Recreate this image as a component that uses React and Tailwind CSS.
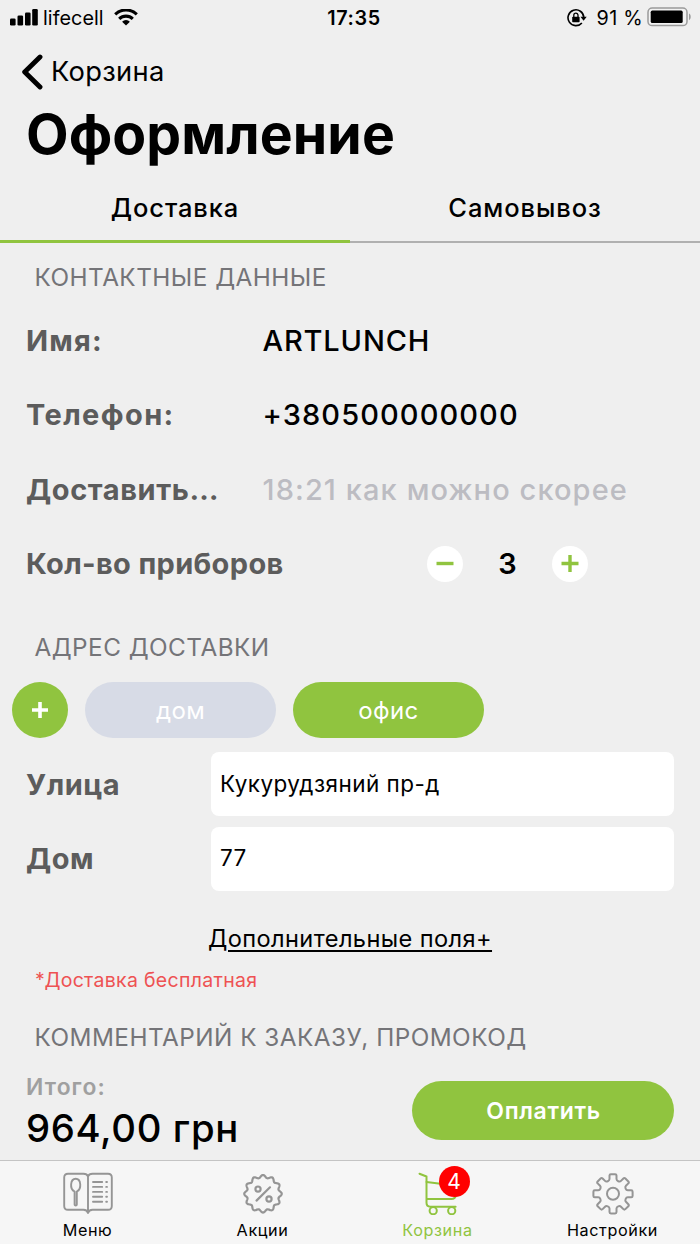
import { useState } from 'react'

const contacts = [
  { label: 'Имя:', value: 'ARTLUNCH', labelClass: 'tracking-[1.2px]', valueClass: 'tracking-[0.85px]' },
  { label: 'Телефон:', value: '+380500000000', labelClass: 'tracking-[1.4px]', valueClass: 'tracking-[1.1px]' },
  {
    label: 'Доставить…',
    value: '18:21 как можно скорее',
    labelClass: 'tracking-[0.6px]',
    valueClass: 'tracking-[1.1px] text-[#bcbcc2]',
  },
]

function StatusBar() {
  return (
    <div className="grid h-[36px] grid-cols-[1fr_auto_1fr] items-center pl-[10px] pr-[8px] text-[19.8px] leading-none">
      <div className="flex items-center">
        <svg width="28" height="18" viewBox="0 0 28 18">
          <rect x="0" y="9.5" width="5.6" height="7" rx="1.3" />
          <rect x="7.5" y="6.5" width="5.6" height="10" rx="1.3" />
          <rect x="15" y="3.5" width="5.6" height="13" rx="1.3" />
          <rect x="22.2" y="0" width="5.6" height="16.5" rx="1.3" />
        </svg>
        <span className="ml-[5px] pt-px tracking-[0.05px]">lifecell</span>
        <svg className="ml-[10px]" width="24" height="18" viewBox="0 0.6 24 18" fill="none" stroke="#000" strokeWidth="3.1">
          <path d="M1.2 5.9a15.8 15.8 0 0 1 21.6 0" />
          <path d="M5.2 10.4a9.9 9.9 0 0 1 13.6 0" />
          <path d="M12 17.2l-3.9-3.9a5.5 5.5 0 0 1 7.8 0z" fill="#000" stroke="none" />
        </svg>
      </div>
      <span className="pl-[6px] pt-px font-semibold tracking-[0.6px]">17:35</span>
      <div className="flex items-center justify-end">
        <svg width="20" height="18" viewBox="0 0 20 18">
          <path d="M14.9 13.9A7.9 7.9 0 1 1 16.8 8.4" fill="none" stroke="#000" strokeWidth="1.6" />
          <path d="M13.5 7.7h6.2l-3.1 4z" />
          <rect x="5.2" y="7.7" width="7.4" height="5.5" rx="0.8" />
          <path d="M6.8 8V6.2a2.1 2.1 0 0 1 4.2 0V8" fill="none" stroke="#000" strokeWidth="1.3" />
        </svg>
        <span className="ml-[10px] pt-px tracking-[0.4px] [word-spacing:-0.5px]">91 %</span>
        <svg className="-mt-px ml-[4px]" width="45" height="20" viewBox="0 0 45 20">
          <rect x="1" y="1" width="39" height="17.6" rx="4.2" fill="#f2f2f2" stroke="#9b9b9b" strokeWidth="1.5" />
          <rect x="3.7" y="3.6" width="32" height="12.4" rx="1.6" />
          <path d="M42 6.6c2.3.8 2.3 5.8 0 6.6z" fill="#9b9b9b" />
        </svg>
      </div>
    </div>
  )
}

function Tabs() {
  return (
    <div className="grid h-[73px] grid-cols-2 text-center text-[25.5px] font-medium leading-[76px] tracking-[0.9px]">
      <button className="h-[73px] border-b-[3px] border-[#90c43f]">Доставка</button>
      <button className="h-[73px] border-b-2 border-[#b0b0b0]">Самовывоз</button>
    </div>
  )
}

function SectionTitle({ children }) {
  return (
    <h2 className="pl-[34.5px] text-[24.3px] font-normal leading-[30px] tracking-[0.47px] text-[#747478]">
      {children}
    </h2>
  )
}

function Field({ label, value }) {
  return (
    <label className="flex h-[74.5px] items-center px-[26px]">
      <span className="w-[185px] text-[29px] font-bold tracking-[0.5px] text-[#5c5c5c]">{label}</span>
      <input
        className="h-[64px] min-w-0 flex-1 rounded-[8px] bg-white px-[9px] pb-[2px] text-[22.5px] tracking-[0.45px] outline-none"
        defaultValue={value}
      />
    </label>
  )
}

function Counter() {
  const [count, setCount] = useState(3)
  return (
    <div className="flex items-center">
      <button
        className="flex size-9 items-center justify-center rounded-full bg-white"
        onClick={() => setCount(Math.max(1, count - 1))}
      >
        <svg width="18" height="18" viewBox="0 0 18 18" stroke="#90c43f" strokeWidth="3.4">
          <path d="M.5 8.500h17" />
        </svg>
      </button>
      <span className="w-[89px] text-center text-[29px] font-semibold">{count}</span>
      <button
        className="flex size-9 items-center justify-center rounded-full bg-white"
        onClick={() => setCount(count + 1)}
      >
        <svg width="18" height="18" viewBox="0 0 18 18" stroke="#90c43f" strokeWidth="3.4">
          <path d="M.5 8.500h17M9 0v17" />
        </svg>
      </button>
    </div>
  )
}

function MenuIcon() {
  return (
    <svg width="50" height="44" viewBox="0 0 50 44" fill="none" stroke="#959595" strokeWidth="1.9" strokeLinecap="round" strokeLinejoin="round">
      <path d="M25 5.4Q24 2.7 20.5 2.7H5Q1.2 2.7 1.2 6.5v28.4q0 3.8 3.8 3.8h15.5q3.6 0 4.5 3.3.9-3.3 4.5-3.3H45q3.8 0 3.8-3.8V6.5q0-3.8-3.8-3.8H29.500Q26 2.700 25 5.400V42" />
      <path d="M11.600 20.500C6.300 18 7.300 7.800 12.700 7.800s6.300 10.200 1.100 12.700V33.500c0 1.300-2.200 1.300-2.200 0z" />
      <path d="M30 11h9.200M30 15.900h9.200M30 20.900h9.200M30 25.800h9.200M30 30.700h9.200M43.200 11h.8M43.200 15.900h.8M43.200 20.900h.8M43.200 25.800h.8M43.200 30.700h.8" />
    </svg>
  )
}

// 12 scalloped waves around the percent badge
function wave() {
  const pts = []
  for (let i = 0; i <= 240; i++) {
    const a = (i / 240) * Math.PI * 2
    const r = 17.4 + 1.35 * Math.cos(a * 12)
    pts.push((20 + r * Math.sin(a)).toFixed(2) + ' ' + (20 - r * Math.cos(a)).toFixed(2))
  }
  return 'M' + pts.join('L') + 'z'
}

function SaleIcon() {
  return (
    <svg width="40" height="44" viewBox="0 -2.8 40 44" fill="none" stroke="#959595" strokeWidth="2.2" strokeLinecap="round">
      <path d={wave()} />
      <path d="M13.500 26.800L27 13.500" />
      <circle cx="15" cy="15.300" r="2.600" />
      <circle cx="26" cy="25.200" r="2.600" />
    </svg>
  )
}

function CartIcon() {
  return (
    <svg width="40" height="44" viewBox="0 0 40 44" fill="none" stroke="#90c43f" strokeWidth="2" strokeLinecap="round" strokeLinejoin="round">
      <path d="M1.500 2.700l7 2.800v26.300q0 3.900 3.900 3.900h25.200" />
      <path d="M8.500 11l30 3.800v8.500q-1.300 4.800-5 4.800H9" />
      <circle cx="15.200" cy="39.700" r="3.600" fill="#f6f6f6" />
      <circle cx="33.700" cy="39.700" r="3.600" fill="#f6f6f6" />
    </svg>
  )
}

// one tooth plus the valley after it, turned eight times
function gear() {
  let d = ''
  for (let i = 0; i < 8; i++) {
    const p = (x, y, turn = i) => {
      const a = (turn * Math.PI) / 4
      return (x * Math.cos(a) - y * Math.sin(a)).toFixed(2) + ' ' + (x * Math.sin(a) + y * Math.cos(a)).toFixed(2)
    }
    d += (i ? 'L' : 'M') + p(-3.5, -14.8)
    d += 'L' + p(-3.5, -18.2) + 'Q' + p(-3.5, -19.6) + ' ' + p(-2.1, -19.6)
    d += 'L' + p(2.1, -19.6) + 'Q' + p(3.5, -19.6) + ' ' + p(3.5, -18.2)
    d += 'L' + p(3.5, -14.8) + 'C' + p(3.5, -12.8) + ' ' + p(-3.5, -12.8, i + 1) + ' ' + p(-3.5, -14.8, i + 1)
  }
  return d + 'z'
}

function GearIcon() {
  return (
    <svg width="44" height="44" viewBox="-22 -22.8 44 44" fill="none" stroke="#959595" strokeWidth="2" strokeLinejoin="round">
      <path d={gear()} />
      <circle cx="0" cy="0" r="6" />
    </svg>
  )
}

function BottomNav() {
  return (
    <nav className="grid h-[84px] shrink-0 grid-cols-4 border-t border-[#c4c4c4] bg-[#f6f6f6] text-[16.2px] tracking-[0.6px]">
      <a className="flex flex-col items-center pt-[10px]">
        <MenuIcon />
        <span className="mt-[5px] leading-5">Меню</span>
      </a>
      <a className="flex flex-col items-center pt-[10px]">
        <SaleIcon />
        <span className="mt-[5px] leading-5">Акции</span>
      </a>
      <a className="flex flex-col items-center pt-[10px] text-[#90c43f]">
        <div className="relative">
          <CartIcon />
          <span className="absolute -top-[5px] left-[21px] flex size-[31px] items-center justify-center rounded-full bg-[#ff0000] text-[21px] tracking-normal text-white">
            4
          </span>
        </div>
        <span className="mt-[5px] leading-5">Корзина</span>
      </a>
      <a className="flex flex-col items-center pt-[10px]">
        <GearIcon />
        <span className="mt-[5px] leading-5">Настройки</span>
      </a>
    </nav>
  )
}

export default function App() {
  return (
    <div className="flex h-[1244px] w-[700px] flex-col overflow-hidden bg-[#efefef] font-['Inter',sans-serif] text-black">
      <StatusBar />

      <header className="h-[134px]">
        <a className="flex h-[70px] items-center pl-[20px] text-[27.3px] leading-none tracking-[0.3px]">
          <svg className="mt-px" width="23" height="36" viewBox="0 0 23 36" fill="none" stroke="#000" strokeWidth="4.9" strokeLinecap="round" strokeLinejoin="round">
            <path d="M20 3L4.700 18l15.300 15" />
          </svg>
          <span className="ml-[8px] pt-[2px]">Корзина</span>
        </a>
        <h1 className="-mt-px pl-[26px] text-[55.3px] font-bold leading-[58px] tracking-[0.1px]">Оформление</h1>
      </header>

      <Tabs />

      <div className="pt-[19px]">
        <SectionTitle>КОНТАКТНЫЕ ДАННЫЕ</SectionTitle>
      </div>
      <div className="mt-[11px]">
        {contacts.map((c) => (
          <div key={c.label} className="flex h-[74.5px] items-center pl-[26px] text-[29px]">
            <span className={'w-[236.5px] font-bold text-[#5c5c5c] ' + c.labelClass}>{c.label}</span>
            <span className={'font-medium ' + c.valueClass}>{c.value}</span>
          </div>
        ))}
        <div className="flex h-[74.5px] items-center pl-[26px]">
          <span className="w-[401px] text-[29px] font-bold tracking-[0.35px] text-[#5c5c5c]">Кол-во приборов</span>
          <Counter />
        </div>
      </div>

      <div className="mt-[31px]">
        <SectionTitle>АДРЕС ДОСТАВКИ</SectionTitle>
      </div>
      <div className="mt-[20px] flex gap-[17px] pl-[12px] text-[24px] tracking-[0.4px] text-white">
        <button className="flex size-14 items-center justify-center rounded-full bg-[#90c43f]">
          <svg width="16" height="16" viewBox="0 0 16 16" stroke="#fff" strokeWidth="3.6">
            <path d="M0 8h16M8 0v16" />
          </svg>
        </button>
        <button className="h-14 w-[191px] rounded-full bg-[#d7dbe6] pt-[2px]">дом</button>
        <button className="h-14 w-[191px] rounded-full bg-[#90c43f] pt-[2px]">офис</button>
      </div>

      <div className="mt-[9px]">
        <Field label="Улица" value="Кукурудзяний пр-д" />
        <Field label="Дом" value="77" />
      </div>

      <div className="mt-[27px] text-center text-[23.6px] leading-[32px] tracking-[0.4px]">
        <a className="underline decoration-[1.5px] underline-offset-[3px]">Дополнительные поля+</a>
      </div>
      <p className="mt-[11px] pl-[35px] text-[19.5px] leading-[28px] tracking-[0.3px] text-[#ee5253]">*Доставка бесплатная</p>
      <div className="mt-[28px]">
        <SectionTitle>КОММЕНТАРИЙ К ЗАКАЗУ, ПРОМОКОД</SectionTitle>
      </div>

      <div className="flex flex-1 items-start justify-between px-[26px] pt-[21px]">
        <div>
          <div className="text-[22.8px] font-semibold leading-[28px] tracking-[1.1px] text-[#a0a0a0]">Итого:</div>
          <div className="mt-[4px] text-[38.3px] font-medium leading-[46px] tracking-[0.65px]">964,00 грн</div>
        </div>
        <button className="mt-[8px] h-[59px] w-[262px] rounded-full bg-[#90c43f] pl-px pt-px text-[23px] font-semibold tracking-[0.65px] text-white">
          Оплатить
        </button>
      </div>

      <BottomNav />
    </div>
  )
}
